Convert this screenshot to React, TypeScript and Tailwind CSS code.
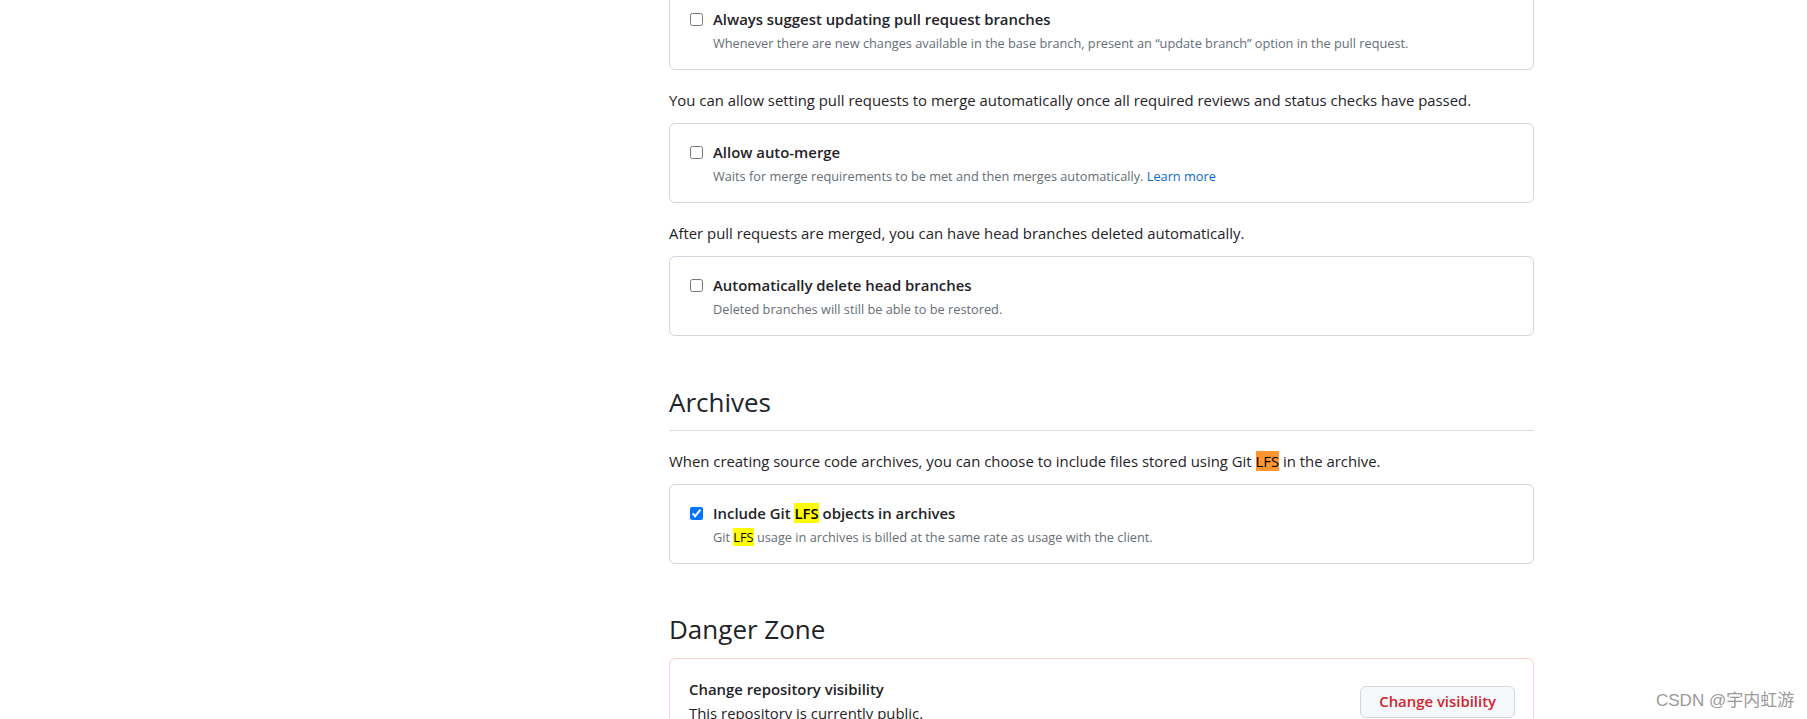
import type { ReactNode } from "react"

const font = { fontFamily: '"Open Sans", "Noto Sans CJK SC", sans-serif' }

function Lfs({ active }: { active?: boolean }) {
  return <span className={active ? "bg-[#ff9632] text-black" : "bg-[#ffff00] text-black"}>LFS</span>
}

function OptionCard({
  title,
  description,
  checked,
}: {
  title: ReactNode
  description: ReactNode
  checked?: boolean
}) {
  return (
    <div className="rounded-md border border-[#d0d7de] bg-white pt-[18px] pb-[17px] pl-4 pr-4">
      <div className="flex items-start">
        <input
          type="checkbox"
          defaultChecked={checked}
          className="mt-[4px] ml-[4px] mr-[10px] h-[13px] w-[13px] shrink-0"
        />
        <div>
          <div className="text-[14.9px] leading-[21px] font-semibold text-[#1f2328]">{title}</div>
          <div className="mt-1 text-[12.75px] leading-[18px] text-[#656d76]">{description}</div>
        </div>
      </div>
    </div>
  )
}

function Note({ children }: { children: ReactNode }) {
  return <p className="mt-5 mb-3 text-[14.9px] leading-[21px] text-[#1f2328]">{children}</p>
}

export default function App() {
  return (
    <div className="relative h-[719px] overflow-hidden bg-white" style={font}>
      <div className="ml-[669px] w-[865px] -mt-[10px]">
        <OptionCard
          title="Always suggest updating pull request branches"
          description="Whenever there are new changes available in the base branch, present an “update branch” option in the pull request."
        />

        <Note>
          You can allow setting pull requests to merge automatically once all required reviews and status checks have
          passed.
        </Note>
        <OptionCard
          title="Allow auto-merge"
          description={
            <>
              Waits for merge requirements to be met and then merges automatically.{" "}
              <a className="text-[#0969da]">Learn more</a>
            </>
          }
        />

        <Note>After pull requests are merged, you can have head branches deleted automatically.</Note>
        <OptionCard
          title="Automatically delete head branches"
          description="Deleted branches will still be able to be restored."
        />

        {/* Archives */}
        <div className="mt-[48px] border-b border-[#d8dee4] pb-[10px]">
          <h2 className="text-[26px] leading-[36px] font-normal text-[#1f2328]">Archives</h2>
        </div>
        <p className="mt-[20px] mb-3 text-[14.9px] leading-[21px] text-[#1f2328]">
          When creating source code archives, you can choose to include files stored using Git <Lfs active /> in the
          archive.
        </p>
        <OptionCard
          checked
          title={
            <>
              Include Git <Lfs /> objects in archives
            </>
          }
          description={
            <>
              Git <Lfs /> usage in archives is billed at the same rate as usage with the client.
            </>
          }
        />

        {/* Danger Zone */}
        <div className="mt-[47px] pb-[11px]">
          <h2 className="text-[26px] leading-[36px] font-normal text-[#1f2328]">Danger Zone</h2>
        </div>
        <div className="rounded-md border border-[#ffcecb] bg-white">
          <div className="flex items-center justify-between pt-[20px] pb-4 pl-[19px] pr-[18px]">
            <div>
              <div className="text-[14.9px] leading-[21px] font-semibold text-[#1f2328]">Change repository visibility</div>
              <div className="mt-[3px] text-[14.9px] leading-[21px] text-[#1f2328]">This repository is currently public.</div>
            </div>
            <button className="h-8 rounded-md border border-[#d0d7de] bg-[#f6f8fa] px-[18px] text-[14.9px] font-semibold text-[#d1242f]">
              Change visibility
            </button>
          </div>
        </div>
      </div>

      <div
        className="absolute left-[1656px] top-[689px] text-[17px] leading-[24px] text-[#9a9a9a]"
        style={{ fontFamily: '"Liberation Sans", "Noto Sans CJK SC", sans-serif' }}
      >
        CSDN @宇内虹游
      </div>
    </div>
  )
}
